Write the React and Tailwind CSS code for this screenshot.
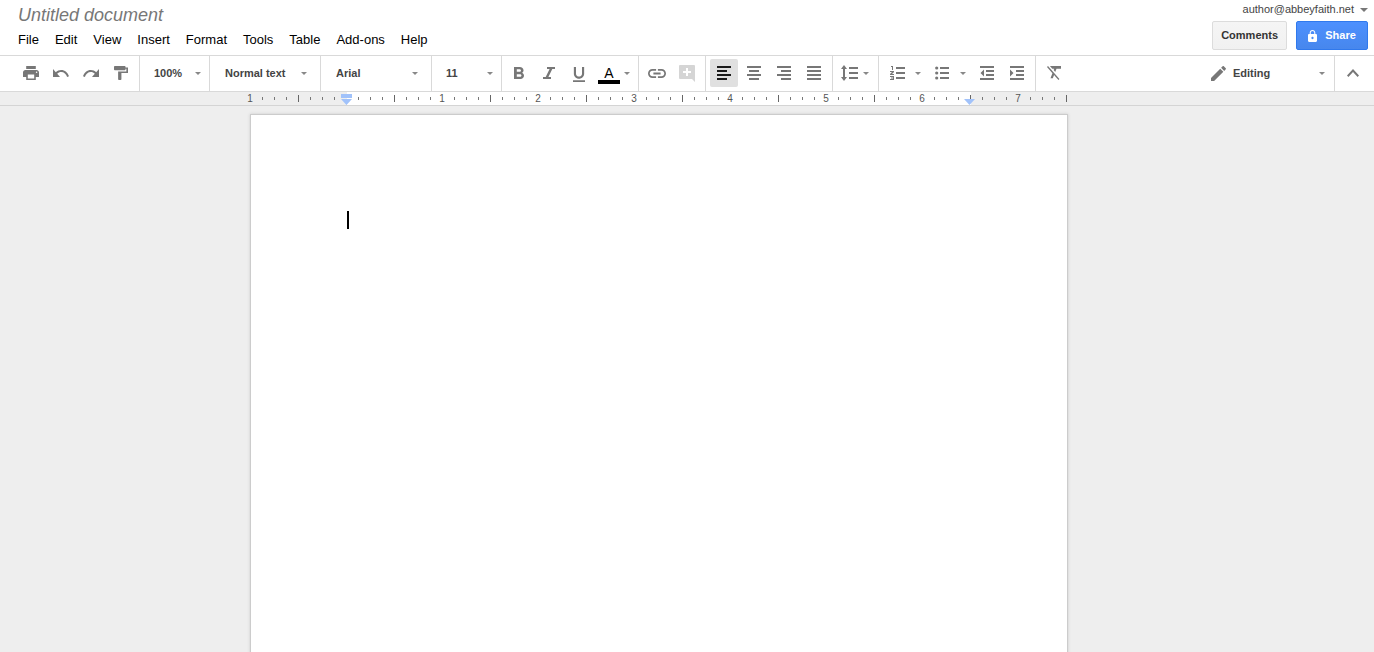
import React from "react";

const MENUS = ["File", "Edit", "View", "Insert", "Format", "Tools", "Table", "Add-ons", "Help"];

function Caret({ className = "h-[3px] w-[6px] text-[#888]" }) {
  return (
    <svg className={`shrink-0 ${className}`} viewBox="0 0 6 3" preserveAspectRatio="none" fill="currentColor" aria-hidden="true">
      <path d="M0 0h6L3 3z" />
    </svg>
  );
}

function Icon({ box, size, d, children }) {
  return (
    <svg className={`shrink-0 ${size}`} viewBox={box} preserveAspectRatio="none" fill="currentColor" aria-hidden="true">
      {d ? <path d={d} /> : children}
    </svg>
  );
}

function Tool({ label, active, disabled, children }) {
  const tone = active ? "bg-[#e0e0e0] text-[#1a1a1a]" : disabled ? "text-[#d5d5d5]" : "text-[#777]";
  return (
    <button
      type="button"
      aria-label={label}
      title={label}
      disabled={disabled}
      aria-pressed={active}
      className={`mx-px flex h-7 w-7 shrink-0 items-center justify-center rounded-xs ${tone}`}
    >
      {children}
    </button>
  );
}

function Group({ className = "", children }) {
  return (
    <div className={`flex h-[35px] shrink-0 items-start border-r border-[#d9d9d9] pt-[3px] ${className}`}>
      {children}
    </div>
  );
}

function Picker({ label, options, className }) {
  return (
    <Group className={className}>
      <div className="relative flex h-7 w-full items-center">
        <select
          aria-label={label}
          className="h-7 w-full appearance-none bg-transparent text-[11px] font-bold text-[#444] outline-none"
        >
          {options.map((o) => (
            <option key={o}>{o}</option>
          ))}
        </select>
        <span className="pointer-events-none absolute right-0 flex">
          <Caret />
        </span>
      </div>
    </Group>
  );
}

const LINES = {
  left: "M0 0h14v2H0zM0 4h10v2H0zM0 8h14v2H0zM0 12h10v2H0z",
  center: "M0 0h14v2H0zM2 4h10v2H2zM0 8h14v2H0zM2 12h10v2H2z",
  right: "M0 0h14v2H0zM4 4h10v2H4zM0 8h14v2H0zM4 12h10v2H4z",
  justify: "M0 0h14v2H0zM0 4h14v2H0zM0 8h14v2H0zM0 12h14v2H0z",
  outdent: "M0 0h14v2H0zM6 4h8v2H6zM6 8h8v2H6zM0 12h14v2H0zM4 3.5v7L.5 7z",
  indent: "M0 0h14v2H0zM6 4h8v2H6zM6 8h8v2H6zM0 12h14v2H0zM0 3.5v7L3.5 7z",
};

function Ruler() {
  const cells = Array.from({ length: 69 }, (_, i) => i);
  return (
    <div className="flex h-[14px] shrink-0 justify-center border-b border-[#d4d4d4] bg-[#eee] pr-14">
      <div className="relative h-[13px] w-[816px] shrink-0">
        <div className="absolute inset-x-24 inset-y-0 bg-white" />
        <div className="absolute -left-[6px] top-0 flex h-[13px] items-center text-[10px] leading-[13px] text-[#555]">
          {cells.map((i) => {
            if (i % 8 === 0) {
              return (
                <span key={i} className="flex w-3 shrink-0 justify-center pr-[2px]">
                  {i === 8 ? "" : Math.abs(i / 8 - 1)}
                </span>
              );
            }
            return (
              <span key={i} className="flex w-3 shrink-0 pl-[5px]">
                <span className={i % 4 === 0 ? "h-[7px] w-px bg-[#666]" : "h-[3px] w-px bg-[#777]"} />
              </span>
            );
          })}
        </div>
        <svg className="absolute left-[90px] top-[2px] h-[11px] w-[11px] text-[#a1c2fa]" viewBox="0 0 11 11" fill="currentColor" aria-hidden="true">
          <path d="M0 0h11v4H0zM0 5h11L5.5 11z" />
        </svg>
        <svg className="absolute right-[92px] top-[7px] h-[6px] w-[11px] text-[#a1c2fa]" viewBox="0 0 11 6" fill="currentColor" aria-hidden="true">
          <path d="M0 0h11L5.5 6z" />
        </svg>
      </div>
    </div>
  );
}

export default function App() {
  return (
    <div className="flex h-screen flex-col overflow-hidden bg-[#eee] font-['Liberation_Sans',Arial,sans-serif]">
      <header className="flex h-[55px] shrink-0 justify-between bg-white pl-[18px] pr-[6px]">
        <div className="flex flex-col pt-1">
          <input
            aria-label="Document title"
            defaultValue="Untitled document"
            className="h-[22px] w-60 text-[18px] italic leading-[22px] text-[#777] outline-none"
          />
          <nav className="mt-1 flex gap-4 text-[13px] leading-[20px] text-black">
            {MENUS.map((m) => (
              <button key={m} type="button">
                {m}
              </button>
            ))}
          </nav>
        </div>
        <div className="flex flex-col items-end pt-[2px]">
          <button type="button" className="flex items-center gap-[6px] text-[11px] leading-[15px] text-[#444]">
            author@abbeyfaith.net
            <Caret className="h-[4px] w-[8px] text-[#777]" />
          </button>
          <div className="mt-1 flex gap-[9px] text-[11px] font-bold">
            <button
              type="button"
              className="h-[29px] rounded-xs border border-[#dcdcdc] bg-linear-to-b from-[#f5f5f5] to-[#f1f1f1] px-2 text-[#333]"
            >
              Comments
            </button>
            <button
              type="button"
              className="flex h-[29px] w-[72px] items-center justify-center gap-2 rounded-xs border border-[#3079ed] bg-linear-to-b from-[#4d90fe] to-[#4787ed] text-white"
            >
              <Icon
                box="4 1 16 21"
                size="h-[12px] w-[9px]"
                d="M18 8h-1V6c0-2.76-2.24-5-5-5S7 3.24 7 6v2H6c-1.1 0-2 .9-2 2v10c0 1.1.9 2 2 2h12c1.1 0 2-.9 2-2V10c0-1.1-.9-2-2-2zm-6 9c-1.1 0-2-.9-2-2s.9-2 2-2 2 .9 2 2-.9 2-2 2zm3.1-9H8.9V6c0-1.71 1.39-3.1 3.1-3.1 1.71 0 3.1 1.39 3.1 3.1v2z"
              />
              Share
            </button>
          </div>
        </div>
      </header>

      <div role="toolbar" aria-label="Formatting" className="flex h-[37px] shrink-0 border-y border-[#d9d9d9] bg-white">
        <Group className="pl-4 pr-[3px]">
          <Tool label="Print">
            <Icon
              box="2 3 20 18"
              size="h-[14px] w-[16px]"
              d="M19 8H5c-1.66 0-3 1.34-3 3v6h4v4h12v-4h4v-6c0-1.66-1.34-3-3-3zm-3 11H8v-5h8v5zm3-7c-.55 0-1-.45-1-1s.45-1 1-1 1 .45 1 1-.45 1-1 1zm-1-9H6v4h12V3z"
            />
          </Tool>
          <Tool label="Undo">
            <Icon
              box="2 7 20.5 9"
              size="h-[8px] w-[16px]"
              d="M12.5 8c-2.65 0-5.05.99-6.9 2.6L2 7v9h9l-3.62-3.62c1.39-1.16 3.16-1.88 5.12-1.88 3.54 0 6.55 2.31 7.6 5.5l2.37-.78C21.08 11.03 17.15 8 12.5 8z"
            />
          </Tool>
          <Tool label="Redo">
            <Icon
              box="1.5 7 20.5 9"
              size="h-[8px] w-[16px]"
              d="M18.4 10.6C16.55 8.99 14.15 8 11.5 8c-4.65 0-8.58 3.03-9.96 7.22L3.9 16c1.05-3.19 4.05-5.5 7.6-5.5 1.95 0 3.73.72 5.12 1.88L13 16h9V7l-3.6 3.6z"
            />
          </Tool>
          <Tool label="Paint format">
            <Icon
              box="4 2 17 20"
              size="h-[14px] w-[14px]"
              d="M18 4V3c0-.55-.45-1-1-1H5c-.55 0-1 .45-1 1v4c0 .55.45 1 1 1h12c.55 0 1-.45 1-1V6h1v4H9v11c0 .55.45 1 1 1h2c.55 0 1-.45 1-1v-9h8V4h-3z"
            />
          </Tool>
        </Group>
        <Picker label="Zoom" className="w-[70px] pl-[14px] pr-[8px]" options={["100%", "125%", "150%"]} />
        <Picker label="Styles" className="w-[111px] pl-[15px] pr-[13px]" options={["Normal text", "Title", "Heading 1"]} />
        <Picker label="Font" className="w-[111px] pl-[15px] pr-[13px]" options={["Arial", "Georgia", "Verdana"]} />
        <Picker label="Font size" className="w-[70px] pl-[14px] pr-[8px]" options={["11", "12", "14"]} />
        <Group className="w-[137px] pl-[2px]">
          <Tool label="Bold">
            <Icon
              box="7 4 10.75 14"
              size="h-[12px] w-[10px]"
              d="M15.6 10.79c.97-.67 1.65-1.77 1.65-2.79 0-2.26-1.75-4-4-4H7v14h7.04c2.09 0 3.71-1.7 3.71-3.79 0-1.52-.86-2.82-2.15-3.42zM10 6.5h3c.83 0 1.5.67 1.5 1.5s-.67 1.5-1.5 1.5h-3v-3zm3.5 9H10v-3h3.5c.83 0 1.5.67 1.5 1.5s-.67 1.5-1.5 1.5z"
            />
          </Tool>
          <Tool label="Italic">
            <Icon box="0 0 12 12" size="h-[12px] w-[12px]" d="M4 0h8v2H9.3L5.4 10H8v2H0v-2h2.7L6.6 2H4z" />
          </Tool>
          <Tool label="Underline">
            <Icon
              box="5 3 14 18"
              size="mt-[2px] h-[15px] w-[12px]"
              d="M12 17c3.31 0 6-2.69 6-6V3h-2.5v8c0 1.93-1.57 3.5-3.5 3.5S8.5 12.93 8.5 11V3H6v8c0 3.31 2.69 6 6 6zm-7 2v2h14v-2H5z"
            />
          </Tool>
          <button type="button" aria-label="Text color" title="Text color" className="flex h-7 items-center gap-[4px] pl-1">
            <span className="flex w-[22px] flex-col items-center border-b-4 border-black pt-1 text-[14px] leading-[14px] text-black">
              A
            </span>
            <Caret />
          </button>
        </Group>
        <Group className="w-[67px] pl-[3px]">
          <Tool label="Insert link">
            <Icon
              box="2 7 20 10"
              size="h-[9px] w-[18px]"
              d="M3.9 12c0-1.71 1.39-3.1 3.1-3.1h4V7H7c-2.76 0-5 2.24-5 5s2.24 5 5 5h4v-1.9H7c-1.71 0-3.1-1.39-3.1-3.1zM8 13h8v-2H8v2zm9-6h-4v1.9h4c1.71 0 3.1 1.39 3.1 3.1s-1.39 3.1-3.1 3.1h-4V17h4c2.76 0 5-2.24 5-5s-2.24-5-5-5z"
            />
          </Tool>
          <Tool label="Insert comment" disabled>
            <Icon box="0 0 16 17" size="h-[17px] w-[16px]" d="M1 0h14a1 1 0 0 1 1 1v16l-3-3H1a1 1 0 0 1-1-1V1a1 1 0 0 1 1-1zM7 3v3H4v2h3v3h2V8h3V6H9V3z" />
          </Tool>
        </Group>
        <Group className="w-[127px] pl-[3px]">
          <Tool label="Left align" active>
            <Icon box="0 0 14 14" size="h-[14px] w-[14px]" d={LINES.left} />
          </Tool>
          <Tool label="Center align">
            <Icon box="0 0 14 14" size="h-[14px] w-[14px]" d={LINES.center} />
          </Tool>
          <Tool label="Right align">
            <Icon box="0 0 14 14" size="h-[14px] w-[14px]" d={LINES.right} />
          </Tool>
          <Tool label="Justify">
            <Icon box="0 0 14 14" size="h-[14px] w-[14px]" d={LINES.justify} />
          </Tool>
        </Group>
        <Group className="w-[46px] pl-2">
          <button type="button" aria-label="Line spacing" title="Line spacing" className="flex h-7 items-center gap-[5px] text-[#777]">
            <Icon box="0 0 17 16" size="h-[16px] w-[17px]" d="M3 0l3 4H4v8h2l-3 4-3-4h2V4H0zM8 2h9v2H8zM8 7h9v2H8zM8 12h9v2H8z" />
            <Caret />
          </button>
        </Group>
        <Group className="w-[157px] pl-[11px]">
          <button type="button" aria-label="Numbered list" title="Numbered list" className="flex h-7 w-[45px] shrink-0 items-center gap-[10px] text-[#777]">
            <Icon
              box="0 0 15 14"
              size="h-[14px] w-[15px]"
              d="M6 1h9v2H6zM6 6h9v2H6zM6 11h9v2H6zM1 0h2v4H2V1H1zM0 5h4v1L2 8h2v1H0V8l2-2H0zM0 10h4v4H0v-1h3v-.5H1v-1h2V11H0z"
            />
            <Caret />
          </button>
          <button type="button" aria-label="Bulleted list" title="Bulleted list" className="flex h-7 w-[37px] shrink-0 items-center gap-[11px] text-[#777]">
            <Icon box="0 0 14 14" size="h-[14px] w-[14px]">
              <circle cx="1.7" cy="2" r="1.6" />
              <circle cx="1.7" cy="7" r="1.6" />
              <circle cx="1.7" cy="12" r="1.6" />
              <path d="M5 1h9v2H5zM5 6h9v2H5zM5 11h9v2H5z" />
            </Icon>
            <Caret />
          </button>
          <Tool label="Decrease indent">
            <Icon box="0 0 14 14" size="h-[14px] w-[14px]" d={LINES.outdent} />
          </Tool>
          <Tool label="Increase indent">
            <Icon box="0 0 14 14" size="h-[14px] w-[14px]" d={LINES.indent} />
          </Tool>
        </Group>
        <div className="flex grow items-start pl-[3px] pt-[3px]">
          <Tool label="Clear formatting">
            <Icon
              box="2 5 18 16"
              size="h-[14px] w-[14px]"
              d="M3.27 5L2 6.27l6.97 6.97L6.5 19h3l1.57-3.66L16.73 21 18 19.73 3.55 5.27 3.27 5zM6 5v.18L8.82 8h2.4l-.72 1.68 2.1 2.1L14.21 8H20V5H6z"
            />
          </Tool>
        </div>
        <Group className="pr-[9px]">
          <label className="relative flex h-7 w-[114px] items-center gap-[7px] text-[#777]">
            <Icon
              box="3 3 18 18"
              size="h-[15px] w-[15px]"
              d="M3 17.25V21h3.75L17.81 9.94l-3.75-3.75L3 17.25zM20.71 7.04c.39-.39.39-1.02 0-1.41l-2.34-2.34c-.39-.39-1.02-.39-1.41 0l-1.83 1.83 3.75 3.75 1.83-1.83z"
            />
            <select aria-label="Mode" className="h-7 min-w-0 flex-1 appearance-none bg-transparent text-[11px] font-bold text-[#444] outline-none">
              <option>Editing</option>
              <option>Suggesting</option>
              <option>Viewing</option>
            </select>
            <span className="pointer-events-none absolute right-0 flex">
              <Caret />
            </span>
          </label>
        </Group>
        <div className="flex w-[39px] shrink-0 items-start pl-[3px] pt-[3px]">
          <Tool label="Hide the menus">
            <Icon box="6 8 12 7.41" size="h-[8px] w-[12px]" d="M12 8l-6 6 1.41 1.41L12 10.83l4.59 4.58L18 14z" />
          </Tool>
        </div>
      </div>

      <Ruler />

      <main className="flex min-h-0 flex-1 items-start justify-center overflow-hidden pr-14 pt-[9px]">
        <div className="relative flex w-[816px] shrink-0 bg-white shadow-[0_0_3px_1px_#ccc] ring-1 ring-[#ccc]">
          <textarea
            aria-label="Document body"
            className="min-h-[1056px] w-full resize-none p-24 text-[15px] leading-[18px] text-black outline-none"
          />
          <span className="pointer-events-none absolute left-24 top-24 h-[18px] w-[2px] bg-black" />
        </div>
      </main>
    </div>
  );
}
